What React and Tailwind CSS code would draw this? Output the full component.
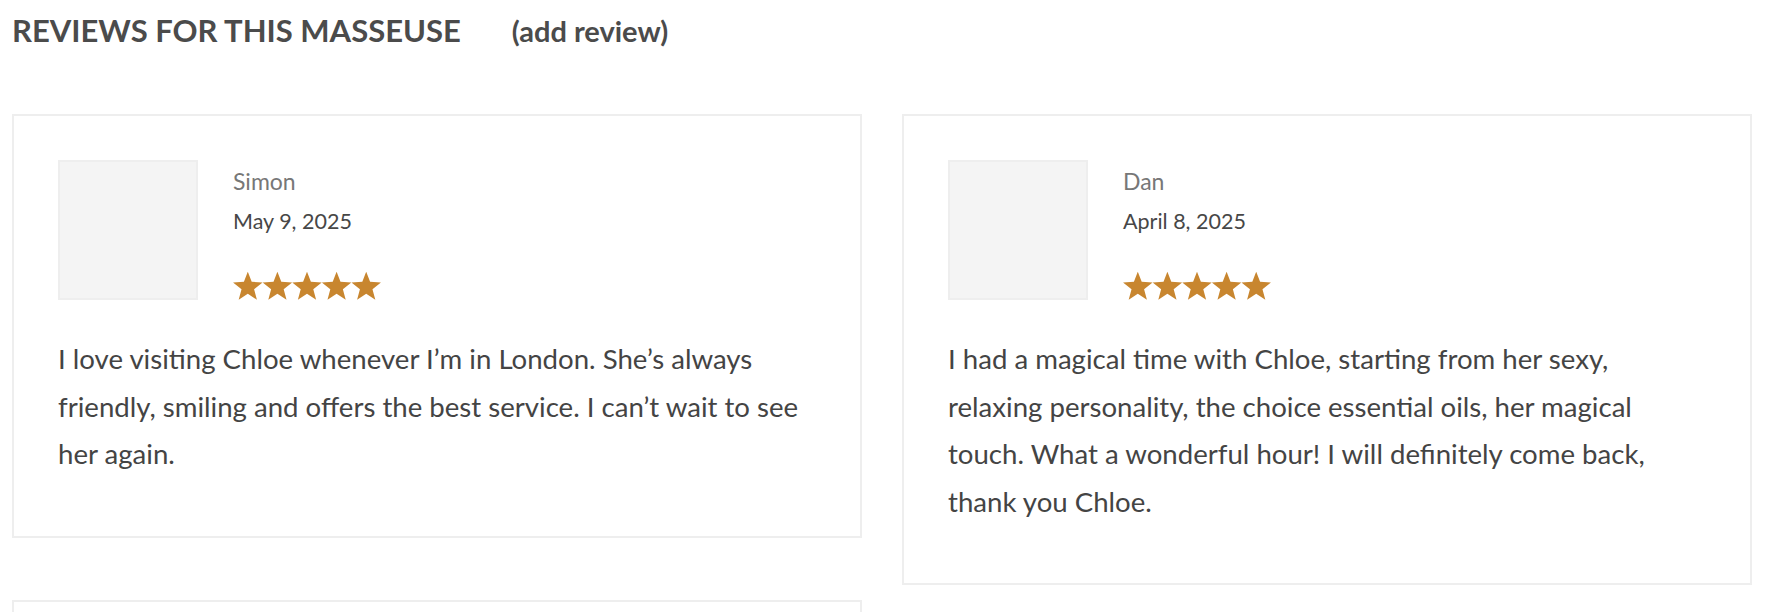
import React from "react";

function Stars() {
  const R = 15.5;
  const r = 6.6;
  const pts = [];
  for (let k = 0; k < 10; k++) {
    const a = ((-90 + 36 * k) * Math.PI) / 180;
    const rad = k % 2 === 0 ? R : r;
    pts.push([Math.cos(a) * rad, Math.sin(a) * rad]);
  }
  const poly = pts.map((p) => p[0].toFixed(2) + "," + p[1].toFixed(2)).join(" ");
  return (
    <svg width="150" height="28" viewBox="0 0 150 28" className="block">
      {[0, 1, 2, 3, 4].map((i) => (
        <polygon key={i} points={poly} fill="#c8862f" transform={`translate(${14.8 + 29.6 * i}, ${R - 0.3})`} />
      ))}
    </svg>
  );
}

function Review({ name, date, lines }) {
  return (
    <div className="border-2 border-[#eeeeee] bg-white pt-[44px] px-[44px] pb-[58px]">
      <div className="flex">
        <div className="w-[140px] h-[140px] shrink-0 border-2 border-[#eeeeee] bg-[#f4f4f4]" />
        <div className="ml-[35px] h-[140px] flex flex-col">
          <div className="mt-[7px] text-[23px] leading-[28px] text-[#777777]">{name}</div>
          <div className="mt-[13px] text-[21.5px] leading-[26px] text-[#474747]">{date}</div>
          <div className="mt-auto">
            <Stars />
          </div>
        </div>
      </div>
      <p className="mt-[35px] text-[27.6px] leading-[47.5px] text-[#444444]">
        {lines.map((l, i) => (
          <React.Fragment key={i}>
            {l}
            {i < lines.length - 1 && <br />}
          </React.Fragment>
        ))}
      </p>
    </div>
  );
}

export default function App() {
  return (
    <div
      className="w-[1792px] h-[612px] overflow-hidden bg-white pl-[12px] pr-[40px]"
      style={{ fontFamily: "Lato, 'Open Sans', sans-serif" }}
    >
      <div className="pt-[10px] flex items-baseline">
        <h2 className="text-[31px] leading-[40px] font-bold text-[#4b4b4b]">REVIEWS FOR THIS MASSEUSE</h2>
        <span className="ml-[51px] text-[29px] leading-[40px] font-bold text-[#4b4b4b]">(add review)</span>
      </div>
      <div className="mt-[63px] grid grid-cols-2 gap-x-[40px] gap-y-[15px] items-start">
        <Review
          name="Simon"
          date="May 9, 2025"
          lines={[
            "I love visiting Chloe whenever I’m in London. She’s always",
            "friendly, smiling and offers the best service. I can’t wait to see",
            "her again.",
          ]}
        />
        <Review
          name="Dan"
          date="April 8, 2025"
          lines={[
            "I had a magical time with Chloe, starting from her sexy,",
            "relaxing personality, the choice essential oils, her magical",
            "touch. What a wonderful hour! I will definitely come back,",
            "thank you Chloe.",
          ]}
        />
        <div className="h-[300px] border-2 border-[#eeeeee] bg-white" />
      </div>
    </div>
  );
}
